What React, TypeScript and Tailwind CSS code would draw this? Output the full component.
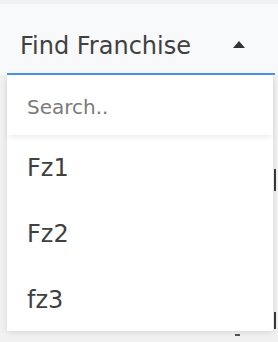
import React from 'react';

const items = ['Fz1', 'Fz2', 'fz3'];

export default function App() {
  return (
    <div
      className="relative w-[278px] h-[342px] overflow-hidden bg-[#f1f1f2] pt-[4px]"
      style={{ fontFamily: '"DejaVu Sans", "Noto Sans", sans-serif' }}>
      {/* content peeking out behind the open menu */}
      <div className="absolute left-[274px] top-[169px] w-[2px] h-[22px] bg-[#3a3a3a]" />
      <div className="absolute left-[274px] top-[312px] w-[2px] h-[17px] bg-[#3a3a3a]" />
      <div className="absolute left-[235px] top-[334px] w-[5px] h-[2px] bg-[#555]" />

      <div className="bg-[#f8f9fb] pl-[7px] pr-[3px]">
        <button className="flex w-full h-[71px] items-center justify-between border-b-2 border-[#4a94f0] pl-[13px] pr-[30px] pt-[14px] text-[24px] text-[#404040]">
          <span>Find Franchise</span>
          <svg width="12" height="7" viewBox="0 0 12 7" className="-mt-[2px]">
            <path d="M6 0 L12 7 L0 7 Z" fill="#333" />
          </svg>
        </button>
      </div>

      <div className="relative ml-[7px] w-[266px] h-[256px] bg-white shadow-[0_1px_6px_rgba(0,0,0,0.12)]">
        <div className="relative z-10 flex h-[60px] items-center bg-white pl-[20px] pt-[3px] text-[20px] text-[#7a7a7a] shadow-[0_4px_6px_-2px_rgba(0,0,0,0.08)]">
          Search..
        </div>
        <ul>
          {items.map((it) => (
            <li key={it} className="flex h-[66px] items-center pl-[20px] text-[24px] text-[#404040]">
              {it}
            </li>
          ))}
        </ul>
      </div>
    </div>
  );
}
